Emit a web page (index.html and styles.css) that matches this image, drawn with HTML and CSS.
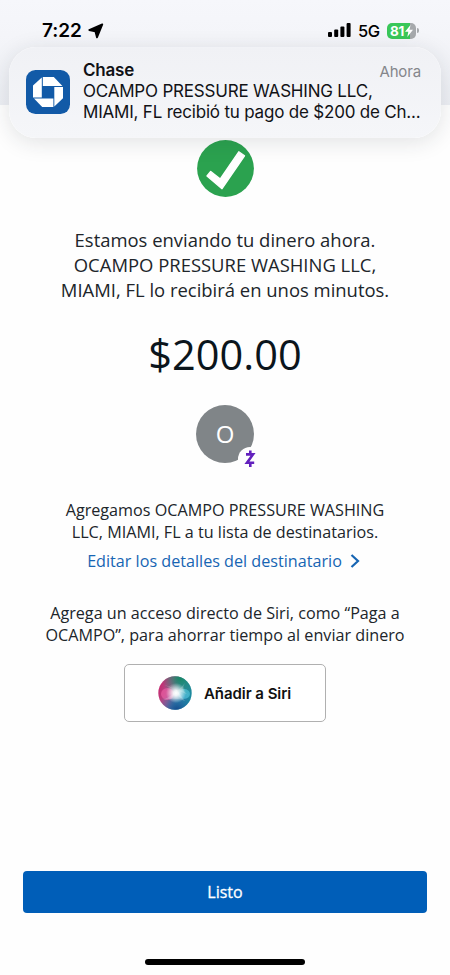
FILE: index.html
```html
<!DOCTYPE html>
<html lang="es">
<head>
<meta charset="utf-8">
<meta name="viewport" content="width=device-width, initial-scale=1">
<title>Chase</title>
<link rel="stylesheet" href="styles.css">
</head>
<body>
<div class="screen">
  <header class="top">
    <div class="status">
      <span class="time">7:22</span>
      <svg class="location" width="16" height="16" viewBox="0 0 16 16"><path d="M14.3 1.4 1.2 7 7.4 8.4 9 14.4Z" stroke="#000" stroke-width="1.8" stroke-linejoin="round"/></svg>
      <svg class="signal" width="23" height="15" viewBox="0 0 23 15"><rect x="0" y="9" width="4" height="5" rx="1"/><rect x="6.2" y="6.5" width="4" height="7.5" rx="1"/><rect x="12.4" y="3.5" width="4" height="10.5" rx="1"/><rect x="18.6" y="0" width="4" height="14" rx="1"/></svg>
      <span class="network">5G</span>
      <div class="battery"><span>81</span><svg width="8" height="12" viewBox="0 0 8 12"><path d="M5.5 0 0 6.8h3.3L2.3 12 8 4.8H4.6Z"/></svg></div>
      <i class="battery-cap"></i>
    </div>
    <section class="notification">
      <svg class="app-icon" width="44" height="44" viewBox="0 0 44 44">
        <rect width="44" height="44" rx="9.5" fill="#125aa7"/>
        <g fill="#fff"><path d="M16.8 7H27.8L36.4 16H16.8Z"/><path d="M28.3 17H37V28.3L28.3 36.5Z"/><path d="M8 28.5H27.4V37H16.2Z"/><path d="M7 15.5 15.8 7.4V27.6H7Z"/></g>
      </svg>
      <div class="note">
        <div class="note-head"><b>Chase</b><span class="when">Ahora</span></div>
        <div class="note-line">OCAMPO PRESSURE WASHING LLC,</div>
        <div class="note-line">MIAMI, FL recibió tu pago de $200 de Ch...</div>
      </div>
    </section>
  </header>
  <main>
    <svg class="check" width="57" height="57" viewBox="0 0 57 57"><circle cx="28.5" cy="28.5" r="28.4" fill="#2ba24f"/><path d="M10 36 13.7 31.5 23.3 39 41.8 11.8 47.5 15.8 25 48.7Z" fill="#fff" stroke="#fff" stroke-width="1.4" stroke-linejoin="round"/></svg>
    <p class="message"><span>Estamos enviando tu dinero ahora.</span><span>OCAMPO PRESSURE WASHING LLC,</span><span>MIAMI, FL lo recibirá en unos minutos.</span></p>
    <div class="amount">$200.00</div>
    <div class="avatar">O<svg class="zelle" width="24" height="24" viewBox="0 0 24 24"><circle cx="12" cy="12" r="12" fill="#fefefe"/><path d="M8 7.4H15L9 15.7H16.2M12.3 3.4V7M12.3 16V20" fill="none" stroke="#6220bd" stroke-width="2.6"/></svg></div>
    <p class="copy added"><span>Agregamos OCAMPO PRESSURE WASHING</span><span>LLC, MIAMI, FL a tu lista de destinatarios.</span></p>
    <a class="edit"><span>Editar los detalles del destinatario</span><svg width="10" height="14" viewBox="0 0 10 14"><path d="M1.5 1 8 7 1.5 13" fill="none" stroke="#1765b3" stroke-width="2.2"/></svg></a>
    <p class="copy hint"><span>Agrega un acceso directo de Siri, como “Paga a</span><span>OCAMPO”, para ahorrar tiempo al enviar dinero</span></p>
    <button class="siri">
      <svg width="34" height="34" viewBox="0 0 34 34">
        <defs>
          <linearGradient id="orb" x1="0" y1=".35" x2="1" y2=".65"><stop offset="0" stop-color="#c8276f"/><stop offset=".35" stop-color="#a85a90"/><stop offset=".6" stop-color="#3f8fae"/><stop offset="1" stop-color="#16889c"/></linearGradient>
          <radialGradient id="green" cx=".65" cy=".05" r=".55"><stop offset="0" stop-color="#168765"/><stop offset="1" stop-color="#168765" stop-opacity="0"/></radialGradient>
          <radialGradient id="blue" cx=".55" cy="1" r=".55"><stop offset="0" stop-color="#174b8c"/><stop offset="1" stop-color="#1b6ab1" stop-opacity="0"/></radialGradient>
          <radialGradient id="shine" cx=".53" cy=".5" r=".3"><stop offset="0" stop-color="#fff"/><stop offset=".25" stop-color="#fff" stop-opacity=".9"/><stop offset="1" stop-color="#fff" stop-opacity="0"/></radialGradient>
        </defs>
        <circle cx="17" cy="17" r="16.7" fill="url(#orb)"/><circle cx="17" cy="17" r="16.7" fill="url(#green)"/><circle cx="17" cy="17" r="16.7" fill="url(#blue)"/>
        <ellipse cx="9.5" cy="18" rx="6.5" ry="6" fill="#fa64ab" opacity=".55"/><ellipse cx="26" cy="18" rx="6" ry="5" fill="#62d8f0" opacity=".5"/>
        <path d="M6 9Q17 10 27 25Q19 21 5 24Q18 18 27 7Q22 15 31 19" fill="#fff" opacity=".22"/>
        <circle cx="17" cy="17" r="16.7" fill="url(#shine)"/>
      </svg>
      <span>Añadir a Siri</span>
    </button>
  </main>
  <footer><button class="done">Listo</button><div class="home"></div></footer>
</div>
</body>
</html>
```
FILE: styles.css
```css
* { box-sizing: border-box; }
body { margin: 0; background: #fefefe; color: #20252a; font-family: "Open Sans", sans-serif; }
button { font: inherit; padding: 0; }
p { margin: 0; }
.screen { width: 450px; height: 975px; display: flex; flex-direction: column; overflow: hidden; }
.top { height: 105px; flex: none; background: linear-gradient(#f6f7fb 0, #f4f5f9 35px, #edeff4 100%); font-family: Inter, sans-serif; color: #111216; }
.status { height: 47px; display: flex; align-items: center; padding: 14px 31px 0 42px; color: #000; }
.time { font-size: 19px; font-weight: 600; letter-spacing: -.1px; width: 41px; white-space: nowrap; }
.location { margin-left: 5px; }
.signal { margin-left: auto; }
.network { font-size: 16.5px; font-weight: 500; margin-left: 7px; width: 22px; letter-spacing: -.4px; }
.battery { width: 29px; height: 16px; margin-left: 7px; border-radius: 5px; background: linear-gradient(90deg, #39c759 81%, #a6a9ac 81%); color: #fff; display: flex; align-items: center; justify-content: center; font-size: 13.5px; font-weight: 700; letter-spacing: -.3px; gap: 1px; }
.battery svg { fill: #fff; }
.battery-cap { width: 2px; height: 5px; margin-left: 1px; border-radius: 0 2px 2px 0; background: #a6a9ac; }
.notification { position: relative; height: 91px; margin: 0 9px; border-radius: 27px; background: linear-gradient(#f0f1f5, #f5f6f9); box-shadow: 0 4px 22px rgba(30, 35, 50, .13), inset 0 0 1px #fff; display: flex; padding: 0 20px 0 17px; }
.app-icon { margin-top: 23px; margin-right: 13px; flex: none; }
.note { flex: 1; min-width: 0; padding-top: 13px; white-space: nowrap; font-size: 17px; line-height: 21px; letter-spacing: -.2px; }
.note-head { display: flex; justify-content: space-between; }
.note-head b { font-weight: 600; }
.when { color: #85868b; font-size: 15px; letter-spacing: -.15px; position: relative; top: 1px; }
main { flex: 1; display: flex; flex-direction: column; align-items: center; padding-top: 35px; }
.check { flex: none; }
.message, .copy { display: flex; flex-direction: column; align-items: center; white-space: nowrap; }
.message { margin-top: 30px; font-size: 18.45px; line-height: 25px; }
.amount { margin-top: 25px; font-size: 41.5px; line-height: 54px; color: #0b151c; }
.avatar { position: relative; width: 58px; height: 58px; margin-top: 24px; border-radius: 50%; background: #808588; color: #fff; font-size: 24px; line-height: 58px; text-align: center; }
.zelle { position: absolute; left: 42px; top: 42px; }
.copy { font-size: 16.17px; line-height: 22px; }
.added { margin-top: 36px; }
.edit { margin-top: 7px; margin-right: 3px; height: 22px; display: flex; align-items: center; gap: 8px; color: #1765b3; font-size: 16.17px; line-height: 22px; white-space: nowrap; }
.hint { margin-top: 30px; }
.siri { width: 202px; height: 58px; margin-top: 18px; border: 1px solid #b0b0b0; border-radius: 5px; background: #fff; display: flex; align-items: center; gap: 12px; padding-left: 33px; color: #111; font: 600 15px Inter, sans-serif; letter-spacing: -.05px; white-space: nowrap; }
footer { height: 104px; flex: none; display: flex; flex-direction: column; align-items: center; }
.done { width: 404px; height: 41.5px; border: 0; border-radius: 4px; background: #005eb8; color: #fff; font-size: 16px; font-weight: 500; -webkit-text-stroke: .3px #fff; }
.home { width: 160px; height: 6px; margin-top: 46.5px; border-radius: 3px; background: #000; }
```
